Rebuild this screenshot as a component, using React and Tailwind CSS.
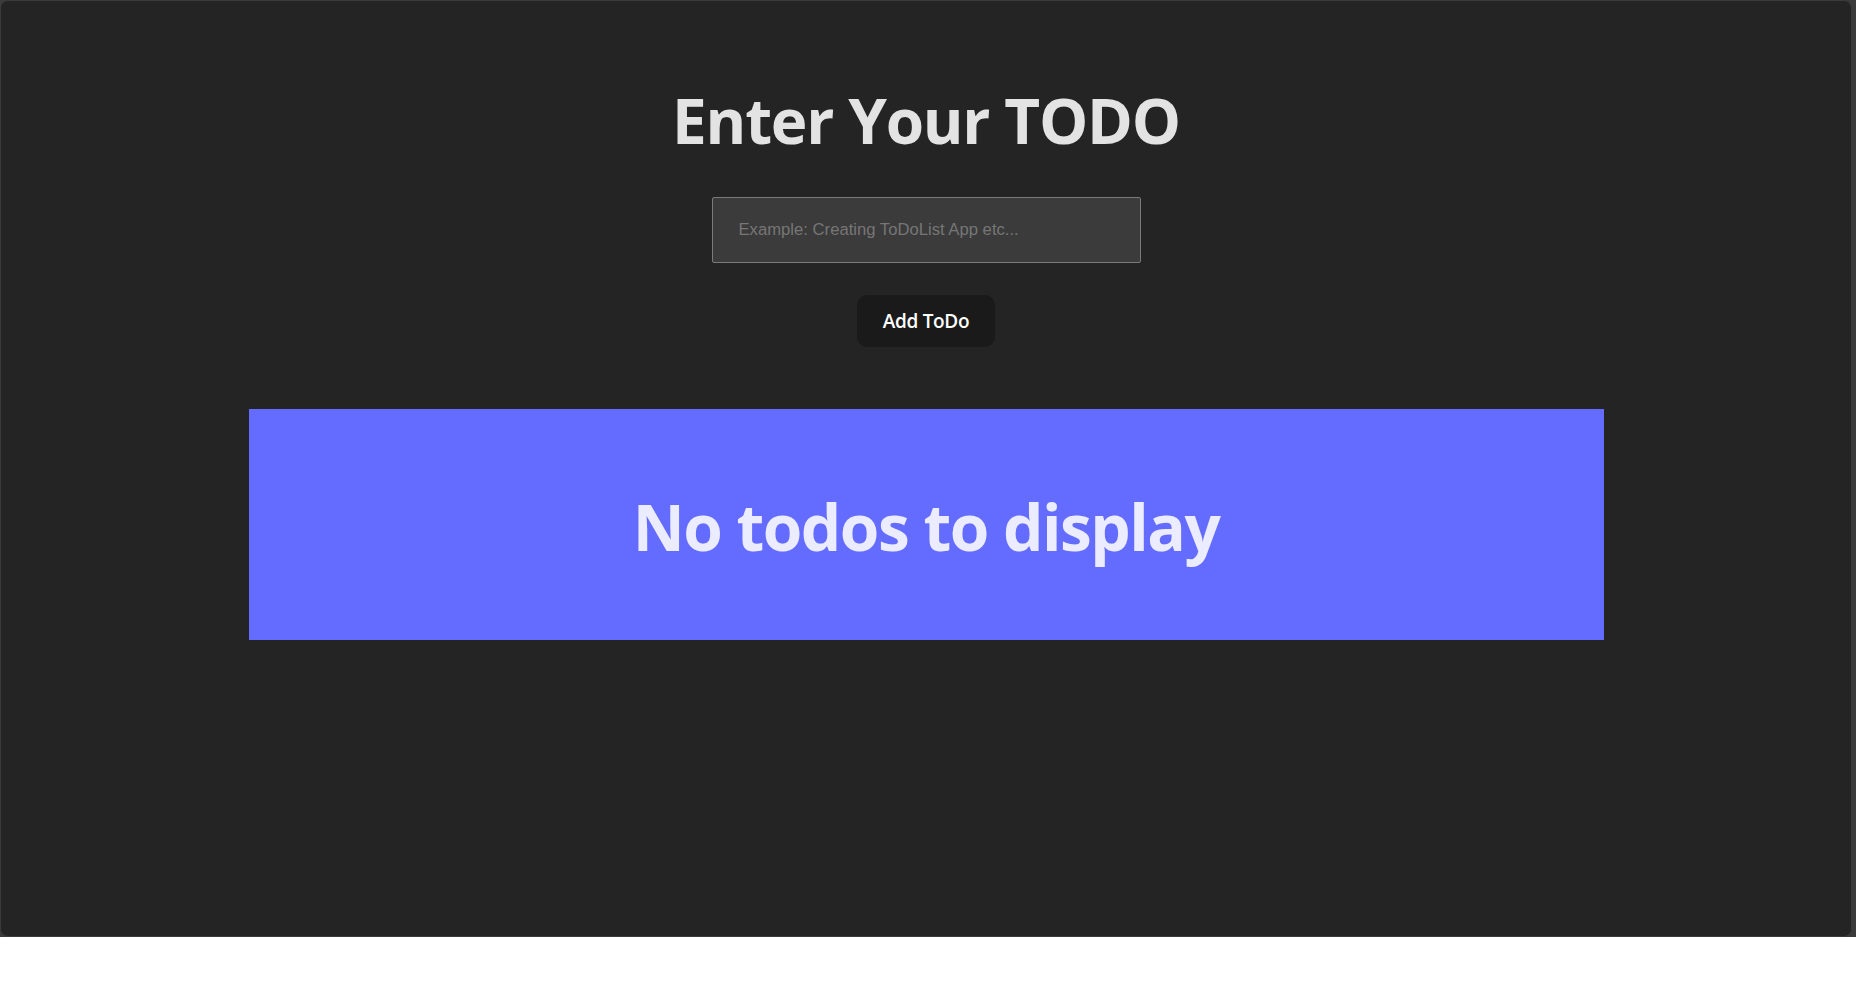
import React, { useState } from 'react';

const App = () => {
  const [text, setText] = useState('');
  const [todos, setTodos] = useState([]);

  const addTodo = () => {
    if (!text.trim()) return;
    setTodos([...todos, text.trim()]);
    setText('');
  };

  return (
    <div className="w-full h-[937px] bg-[#3b3b3b] font-['Open_Sans',sans-serif]">
      <div className="w-[1852px] h-full flex flex-col items-center rounded-lg border border-[#3a3a3a] bg-[#242424] pt-[85px]">
        {/* Heading */}
        <h1 className="text-[62px] leading-[1.1] font-bold text-[#e3e3e3] tracking-[-1.2px]">
          Enter Your TODO
        </h1>

        <input
          type="text"
          value={text}
          onChange={(e) => setText(e.target.value)}
          placeholder="Example: Creating ToDoList App etc..."
          className="mt-[43px] w-[429px] h-[66px] px-[26px] bg-[#3b3b3b] border border-[#7a7a7a] rounded-[2px] text-[16.67px] text-[#e3e3e3] placeholder:text-[#767676] font-['Liberation_Sans',Arial,sans-serif] outline-none"
        />

        <button
          onClick={addTodo}
          className="mt-[32px] h-[52px] px-[26px] rounded-[10px] bg-[#1a1a1a] text-white text-[19px] font-semibold tracking-[-0.3px]"
        >
          Add ToDo
        </button>

        {/* Todo list */}
        {todos.length === 0 ? (
          <div className="mt-[62px] w-[1355px] h-[231px] bg-[#646cff] flex items-center justify-center pt-[6px]">
            <h1 className="text-[64px] leading-[1.1] font-bold text-[#ebecff] tracking-[-1.5px]">
              No todos to display
            </h1>
          </div>
        ) : (
          <ul className="mt-[62px] w-[1355px] flex flex-col gap-2">
            {todos.map((t, i) => (
              <li key={i} className="bg-[#646cff] text-[#ebecff] text-2xl px-6 py-4">
                {t}
              </li>
            ))}
          </ul>
        )}
      </div>
    </div>
  );
};

export default App;
